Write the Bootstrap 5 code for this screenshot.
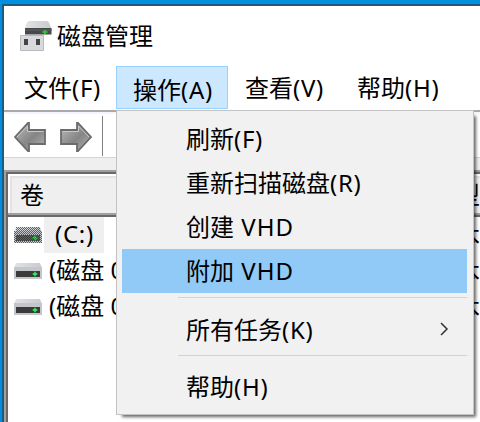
<!DOCTYPE html>
<html lang="zh-CN">
<head>
<meta charset="utf-8">
<title>磁盘管理</title>
<link href="https://cdn.jsdelivr.net/npm/bootstrap@5.3.0/dist/css/bootstrap.min.css" rel="stylesheet">
<style>
body{width:480px;height:422px;background:#0090df;color:#000;font:24px/36px "Noto Sans","Noto Sans CJK SC",sans-serif;white-space:nowrap}
.lat{letter-spacing:.7px}
.vhd{letter-spacing:1px;margin-left:1px}
.win{margin:4px 0 0 2px;width:478px;height:418px;border-left:2px solid #23597a;border-top:2px solid #23597a}
.title-row{height:60px;padding-left:15px}
.title-row svg{margin-right:2px}
.menu-row{height:44px;padding-left:2px}
.menu-row a{color:#000;text-decoration:none;height:43px;line-height:44px;padding-left:18px}
.menu-row a.open{width:112px;padding-left:16px;line-height:45px;background:#cce8ff;border:1px solid #99d1ff}
.tools{height:48px;border-top:2px solid #a9a9ad;border-bottom:1px solid #d5d5d5;padding:4px 0 0 9px;background:linear-gradient(#f3f6fc,#f3f6fc) 0 0/100% 2px no-repeat #fff}
.tools svg{margin-top:3px}
.rule-v{width:1px;height:40px;background:#808080;margin-left:9px}
.strip{height:12px;background:#efefef}
.frame{height:252px;border-left:2px solid #a0a0a0;border-top:2px solid #a0a0a0}
.inner-frame{height:250px;border-left:2px solid #696969;border-top:2px solid #696969}
.head-row{height:43px;background:#efefef;border-bottom:2px solid #696969;box-shadow:inset 0 -2px #a0a0a0,inset 2px 2px #fff,inset 4px 4px #e3e3e3;padding-left:12px}
.vol-row{height:36px;padding-left:6px}
.vol-row .name{height:36px;line-height:33px;width:376px;margin-left:7px;overflow:hidden}
.vol-row .sel{width:60px;margin-left:2px;margin-right:321px;background:#efefef;padding-left:11px}
.kind{line-height:35px;margin-left:7px}
.menu-pop{position:absolute;left:116px;top:110px;width:358px;height:305px;background:#f1f1f1;border:1px solid #c3c3c3;padding:6px 6px 5px 5px;box-shadow:4px 4px 3px -2px rgba(0,0,0,.6)}
.menu-pop a{height:44px;line-height:43px;padding-left:64px;padding-right:18px;color:#000;text-decoration:none}
.menu-pop a.hot{background:#91c9f7}
.menu-pop .sep{height:14px;padding:4px 0 0 56px}
.menu-pop .sep div{height:1px;background:#d2d2d2}
</style>
<script src="https://cdn.jsdelivr.net/npm/bootstrap@5.3.0/dist/js/bootstrap.bundle.min.js"></script>
</head>
<body class="overflow-hidden position-relative">
<svg width="0" height="0" class="position-absolute"><defs>
<linearGradient id="arr" x1="0" y1="0" x2="1" y2="1"><stop offset="0" stop-color="#bdbdbd"/><stop offset=".55" stop-color="#858585"/><stop offset="1" stop-color="#b5b5b5"/></linearGradient>
<linearGradient id="top"><stop offset="0" stop-color="#e2e3e6"/><stop offset="1" stop-color="#c9cacf"/></linearGradient>
<pattern id="dots" width="2" height="2" patternUnits="userSpaceOnUse"><path d="M0 0h1v1H0zM1 1h1v1H1z" fill="#0877cc"/></pattern>
<symbol id="drive" viewBox="0 0 28 16"><path d="M2 0h24l2 5H0z" fill="url(#top)"/><path d="M0 4h28v12H0z" fill="#c4c6cb"/><path d="M2 8h24v6H2z" fill="#3b3b3b"/><path d="M18 11h6M21 8v6" stroke="#167c2c" stroke-width="2"/><path d="M19 11h4M21 9v4" stroke="#4be85c" stroke-width="1.3"/></symbol>
</defs></svg>
<div class="win bg-white overflow-hidden">
  <div class="title-row d-flex align-items-center">
    <svg width="36" height="36" viewBox="0 0 36 36"><path d="M10 3h18q2 0 4 7H6q2-7 4-7z" fill="url(#top)"/><path d="M6 10h26.500v6.500H6z" fill="#46484a"/><path d="M6 12h27" stroke="#5e6062"/><path d="M23.500 14h5M26 12v4" stroke="#29c33a" stroke-width="2"/><path d="M1.500 17.500h23v15h-23z" fill="#d9d9dd" stroke="#b8b9bd"/><path d="M5 21h4v6H5zM17 21h4v6h-4z" fill="#444"/></svg>
    <span>磁盘管理</span>
  </div>
  <nav class="menu-row d-flex">
    <a href="#" style="width:110px">文件<span class="lat">(F)</span></a>
    <a href="#" class="open">操作<span class="lat">(A)</span></a>
    <a href="#" style="width:112px;padding-left:17px">查看<span class="lat">(V)</span></a>
    <a href="#" style="padding-left:17px">帮助<span class="lat">(H)</span></a>
  </nav>
  <div class="tools d-flex">
    <svg width="34" height="36" viewBox="0 0 34 36" class="flex-shrink-0"><path d="M2 18L15 4h1v7h16v14H16v7h-1z" fill="url(#arr)" stroke="#6b6b6b" stroke-width="1.800"/><path d="M4 18L14.500 7v5.500H30.500" fill="none" stroke="#c8c8c8"/></svg>
    <svg width="34" height="36" viewBox="0 0 34 36" class="flex-shrink-0" style="margin-left:12px"><path d="M32 18L19 4h-1v7H2v14h16v7h1z" fill="url(#arr)" stroke="#6b6b6b" stroke-width="1.800"/><path d="M30 18L19.500 7v5.500H3.500" fill="none" stroke="#c8c8c8"/></svg>
    <div class="rule-v"></div>
  </div>
  <div class="strip"></div>
  <div class="frame"><div class="inner-frame">
    <div class="head-row d-flex align-items-center"><span style="width:412px">卷</span><span>类型</span></div>
    <div class="vol-row d-flex align-items-center"><svg width="28" height="16" class="flex-shrink-0"><use href="#drive"/><path d="M2 0h24v4h2v12H0V4h2z" fill="url(#dots)"/></svg><span class="name sel flex-shrink-0 lat">(C:)</span><span class="kind">基本</span></div>
    <div class="vol-row d-flex align-items-center"><svg width="28" height="16" class="flex-shrink-0"><use href="#drive"/></svg><span class="name flex-shrink-0">(磁盘 0</span><span class="kind">基本</span></div>
    <div class="vol-row d-flex align-items-center"><svg width="28" height="16" class="flex-shrink-0"><use href="#drive"/></svg><span class="name flex-shrink-0">(磁盘 0</span><span class="kind">基本</span></div>
  </div></div>
</div>
<div class="menu-pop d-flex flex-column">
  <a href="#">刷新<span class="lat">(F)</span></a>
  <a href="#">重新扫描磁盘<span class="lat">(R)</span></a>
  <a href="#">创建 <span class="vhd">VHD</span></a>
  <a href="#" class="hot">附加 <span class="vhd">VHD</span></a>
  <div class="sep"><div></div></div>
  <a href="#" class="d-flex justify-content-between align-items-center"><span>所有任务<span class="lat">(K)</span></span><svg width="10" height="14" viewBox="0 0 10 14"><path d="M2 1l6 6-6 6" fill="none" stroke="#333" stroke-width="1.500"/></svg></a>
  <div class="sep"><div></div></div>
  <a href="#">帮助<span class="lat">(H)</span></a>
</div>
</body>
</html>
